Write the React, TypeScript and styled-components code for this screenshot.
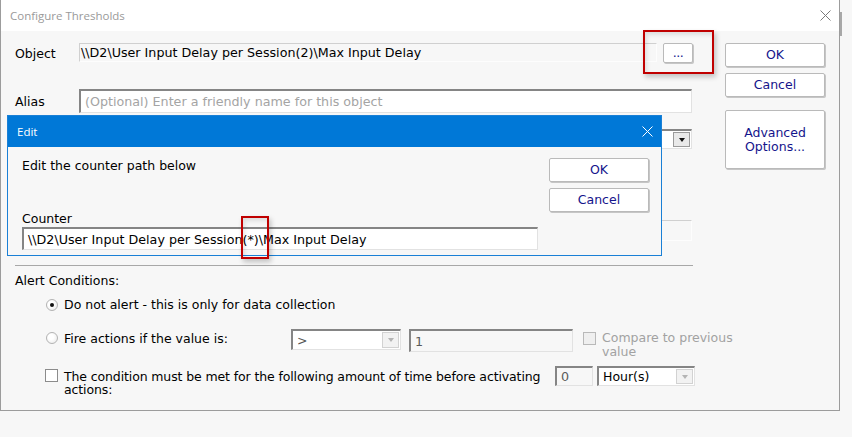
import React from 'react';
import styled, { createGlobalStyle } from 'styled-components';

const UI_FONT = '"DejaVu Sans", Verdana, sans-serif';
const TITLE_FONT = '"Open Sans", "Noto Sans", sans-serif';

const GlobalStyle = createGlobalStyle`
  * { box-sizing: border-box; }
  html, body { margin: 0; padding: 0; }
  body {
    width: 852px;
    height: 437px;
    overflow: hidden;
    background: #f7f7f7;
    font-family: ${UI_FONT};
    font-size: 12.5px;
    color: #000;
  }
`;

const Desktop = styled.div`
  position: relative;
  width: 852px;
  height: 437px;
  background: #f7f7f7;
`;

// sliver of another window peeking out behind the dialog
const BehindEdge = styled.div`
  position: absolute;
  left: 840px;
  top: 12px;
  width: 2px;
  height: 24px;
  background: #a8a8a8;
`;

const Window = styled.div`
  width: 840px;
  height: 411px;
  border: 1px solid #9c9c9c;
  border-top: none;
  background: #f7f7f7;
  display: flex;
  flex-direction: column;
`;

const TitleBar = styled.div<{ $active?: boolean }>`
  height: 31px;
  flex-shrink: 0;
  display: flex;
  align-items: center;
  justify-content: space-between;
  padding: 0 8px 0 9px;
  background: ${(p) => (p.$active ? '#0078d7' : '#fff')};
  color: ${(p) => (p.$active ? '#fff' : '#9a9a9a')};
  font-family: ${TITLE_FONT};
  font-size: 11.5px;
`;

const Body = styled.div`
  display: flex;
  padding: 12px 0 0 14px;
`;

const FormColumn = styled.div`
  width: 678px;
  display: flex;
  flex-direction: column;
`;

const SideColumn = styled.div`
  margin-left: 32px;
  width: 100px;
  display: flex;
  flex-direction: column;
`;

const PushButton = styled.button<{ $h?: number; $mt?: number }>`
  width: 100%;
  height: ${(p) => p.$h ?? 24}px;
  margin: ${(p) => p.$mt ?? 0}px 0 0 0;
  padding: 0;
  background: #fff;
  border: 1px solid #bababa;
  border-radius: 2px;
  box-shadow: 1px 1px 0 #c6c6c6;
  font-family: ${UI_FONT};
  font-size: 12.5px;
  line-height: 14px;
  color: #14148c;
`;

const DotsButton = styled(PushButton)`
  width: 30px;
  height: 20px;
  margin-left: 6px;
  padding-bottom: 1px;
  letter-spacing: -0.5px;
`;

const FieldRow = styled.div<{ $mt: number; $h: number }>`
  display: flex;
  align-items: center;
  margin-top: ${(p) => p.$mt}px;
  height: ${(p) => p.$h}px;
`;

const Label = styled.span`
  width: 64px;
  flex-shrink: 0;
`;

type BoxKind = 'sunken' | 'flat';

const TextBox = styled.div<{ $w: number; $h: number; $kind?: BoxKind; $disabled?: boolean; $muted?: boolean }>`
  width: ${(p) => p.$w}px;
  height: ${(p) => p.$h}px;
  flex-shrink: 0;
  display: flex;
  align-items: center;
  padding-left: ${(p) => (p.$kind === 'flat' ? 1 : 4)}px;
  white-space: nowrap;
  overflow: hidden;
  font-size: 12.7px;
  background: ${(p) => (p.$kind === 'flat' || p.$disabled ? '#f7f7f7' : '#fff')};
  border: 1px solid ${(p) => (p.$kind === 'flat' ? '#fdfdfd' : '#e2e2e2')};
  border-top: ${(p) => (p.$kind === 'flat' ? '1px solid #d0d0d0' : '2px solid #858585')};
  border-left: ${(p) => (p.$kind === 'flat' ? '1px solid #d0d0d0' : '2px solid #858585')};
  color: ${(p) => (p.$muted ? '#a4a4a4' : p.$disabled ? '#5a5a5a' : '#000')};
`;

const Combo = styled.div<{ $w: number; $h: number; $disabled?: boolean }>`
  width: ${(p) => p.$w}px;
  height: ${(p) => p.$h}px;
  flex-shrink: 0;
  display: flex;
  align-items: center;
  justify-content: space-between;
  padding: 1px 1px 1px 4px;
  background: #fff;
  border: 1px solid #e2e2e2;
  border-top: 2px solid #858585;
  border-left: 2px solid #858585;
  color: ${(p) => (p.$disabled ? '#555' : '#000')};
`;

const ComboArrow = styled.span<{ $disabled?: boolean }>`
  width: 17px;
  height: 100%;
  display: flex;
  align-items: center;
  justify-content: center;
  background: ${(p) => (p.$disabled ? '#f2f2f2' : '#e9e9e9')};
  border: 1px solid ${(p) => (p.$disabled ? '#d2d2d2' : '#9a9a9a')};

  &::after {
    content: '';
    width: 0;
    height: 0;
    border-left: 3.5px solid transparent;
    border-right: 3.5px solid transparent;
    border-top: 4px solid ${(p) => (p.$disabled ? '#b4b4b4' : '#111')};
  }
`;

const Separator = styled.div`
  margin-top: 24px;
  height: 1px;
  background: #a8a8a8;
`;

const SectionTitle = styled.div`
  margin-top: 7px;
  line-height: 15px;
`;

const OptionRow = styled.div<{ $mt: number; $pl: number }>`
  display: flex;
  align-items: flex-start;
  margin-top: ${(p) => p.$mt}px;
  padding-left: ${(p) => p.$pl}px;
`;

const Radio = styled.span<{ $checked?: boolean; $mt?: number }>`
  position: relative;
  width: 12px;
  height: 12px;
  flex-shrink: 0;
  margin-top: ${(p) => p.$mt ?? 0}px;
  border-radius: 50%;
  border: 1px solid #b3b3b3;
  background: radial-gradient(circle at 40% 40%, #fff 30%, #e6e6e6 100%);

  &::after {
    content: '';
    display: ${(p) => (p.$checked ? 'block' : 'none')};
    position: absolute;
    left: 3px;
    top: 3px;
    width: 4px;
    height: 4px;
    border-radius: 50%;
    background: #111;
  }
`;

const CheckBox = styled.span<{ $disabled?: boolean; $mt?: number }>`
  width: 13px;
  height: 13px;
  flex-shrink: 0;
  margin-top: ${(p) => p.$mt ?? 0}px;
  border: 1px solid ${(p) => (p.$disabled ? '#b9b9b9' : '#8c8c8c')};
  background: ${(p) => (p.$disabled ? '#efefef' : '#fff')};
`;

const OptionText = styled.span<{ $w?: number; $mt?: number; $lh?: number; $muted?: boolean; $tight?: boolean }>`
  margin-left: 6px;
  margin-top: ${(p) => p.$mt ?? 0}px;
  line-height: ${(p) => p.$lh ?? 15}px;
  ${(p) => (p.$w ? `width: ${p.$w}px; flex-shrink: 0;` : 'white-space: nowrap;')}
  ${(p) => (p.$tight ? 'letter-spacing: -0.12px;' : '')}
  color: ${(p) => (p.$muted ? '#a2a2a2' : '#000')};
`;

const Gap = styled.span<{ $w: number }>`
  width: ${(p) => p.$w}px;
  flex-shrink: 0;
`;

// the Edit dialog floats over the main window
const Dialog = styled.div`
  position: absolute;
  left: 7px;
  top: 115px;
  width: 655px;
  height: 141px;
  border: 1px solid #1a80d6;
  background: #f7f7f7;
  display: flex;
  flex-direction: column;
`;

const DialogBody = styled.div`
  display: flex;
  padding: 11px 12px 0 14px;
`;

const DialogMain = styled.div`
  flex: 1;
  display: flex;
  flex-direction: column;
`;

const DialogSide = styled.div`
  width: 100px;
  display: flex;
  flex-direction: column;
`;

const PlainLine = styled.div<{ $mt?: number }>`
  margin-top: ${(p) => p.$mt ?? 0}px;
  line-height: 15px;
`;

const Highlight = styled.div<{ $x: number; $y: number; $w: number; $h: number }>`
  position: absolute;
  left: ${(p) => p.$x}px;
  top: ${(p) => p.$y}px;
  width: ${(p) => p.$w}px;
  height: ${(p) => p.$h}px;
  border: 2px solid #c00000;
  box-shadow: 2px 3px 5px rgba(0, 0, 0, 0.22), inset 2px 3px 4px rgba(0, 0, 0, 0.1);
  pointer-events: none;
`;

function CloseIcon({ color }: { color: string }) {
  return (
    <svg width="11" height="11" viewBox="0 0 11 11">
      <path d="M0.5 0.5 L10.5 10.5 M10.5 0.5 L0.5 10.5" stroke={color} strokeWidth="1" />
    </svg>
  );
}

function EditDialog() {
  return (
    <Dialog>
      <TitleBar $active>
        <span>Edit</span>
        <CloseIcon color="#ffffff" />
      </TitleBar>
      <DialogBody>
        <DialogMain>
          <PlainLine>Edit the counter path below</PlainLine>
          <PlainLine $mt={38}>Counter</PlainLine>
          <TextBox $w={516} $h={23} $kind="sunken" style={{ marginTop: 1 }}>
            \\D2\User Input Delay per Session(*)\Max Input Delay
          </TextBox>
        </DialogMain>
        <DialogSide>
          <PushButton>OK</PushButton>
          <PushButton $mt={6}>Cancel</PushButton>
        </DialogSide>
      </DialogBody>
    </Dialog>
  );
}

export default function App() {
  return (
    <Desktop>
      <GlobalStyle />
      <BehindEdge />
      <Window>
        <TitleBar>
          <span>Configure Thresholds</span>
          <CloseIcon color="#7a7a7a" />
        </TitleBar>
        <Body>
          <FormColumn>
            <FieldRow $mt={0} $h={20}>
              <Label>Object</Label>
              <TextBox $w={578} $h={19} $kind="flat" style={{ alignSelf: 'flex-start' }}>
                \\D2\User Input Delay per Session(2)\Max Input Delay
              </TextBox>
              <DotsButton>...</DotsButton>
            </FieldRow>
            <FieldRow $mt={26} $h={24}>
              <Label>Alias</Label>
              <TextBox $w={613} $h={24} $kind="sunken" $muted>
                (Optional) Enter a friendly name for this object
              </TextBox>
            </FieldRow>
            {/* rows hidden behind the Edit dialog */}
            <FieldRow $mt={16} $h={20}>
              <Label />
              <Combo $w={613} $h={20}>
                <span />
                <ComboArrow />
              </Combo>
            </FieldRow>
            <FieldRow $mt={71} $h={21}>
              <Label />
              <TextBox $w={613} $h={21} $kind="flat" />
            </FieldRow>
            <Separator />
            <SectionTitle>Alert Conditions:</SectionTitle>
            <OptionRow $mt={9} $pl={31}>
              <Radio $checked $mt={2} />
              <OptionText>Do not alert - this is only for data collection</OptionText>
            </OptionRow>
            <OptionRow $mt={17} $pl={31}>
              <Radio $mt={3} />
              <OptionText $w={227} $mt={2}>Fire actions if the value is:</OptionText>
              <Combo $w={110} $h={21} $disabled>
                <span>&gt;</span>
                <ComboArrow $disabled />
              </Combo>
              <Gap $w={8} />
              <TextBox $w={164} $h={23} $kind="sunken" $disabled>
                1
              </TextBox>
              <Gap $w={10} />
              <CheckBox $disabled $mt={3} />
              <OptionText $muted $lh={14} $mt={2}>
                Compare to previous
                <br />
                value
              </OptionText>
            </OptionRow>
            <OptionRow $mt={7} $pl={30}>
              <CheckBox $mt={3} />
              <OptionText $w={489} $mt={4} $lh={13} $tight>
                The condition must be met for the following amount of time before activating actions:
              </OptionText>
              <Gap $w={2} />
              <TextBox $w={38} $h={20} $kind="sunken" $disabled>
                0
              </TextBox>
              <Gap $w={4} />
              <Combo $w={98} $h={20}>
                <span>Hour(s)</span>
                <ComboArrow $disabled />
              </Combo>
            </OptionRow>
          </FormColumn>
          <SideColumn>
            <PushButton>OK</PushButton>
            <PushButton $mt={6}>Cancel</PushButton>
            <PushButton $mt={13} $h={59}>
              Advanced
              <br />
              Options...
            </PushButton>
          </SideColumn>
        </Body>
      </Window>
      <EditDialog />
      <Highlight $x={643} $y={30} $w={71} $h={44} />
      <Highlight $x={241} $y={216} $w={28} $h={43} />
    </Desktop>
  );
}
